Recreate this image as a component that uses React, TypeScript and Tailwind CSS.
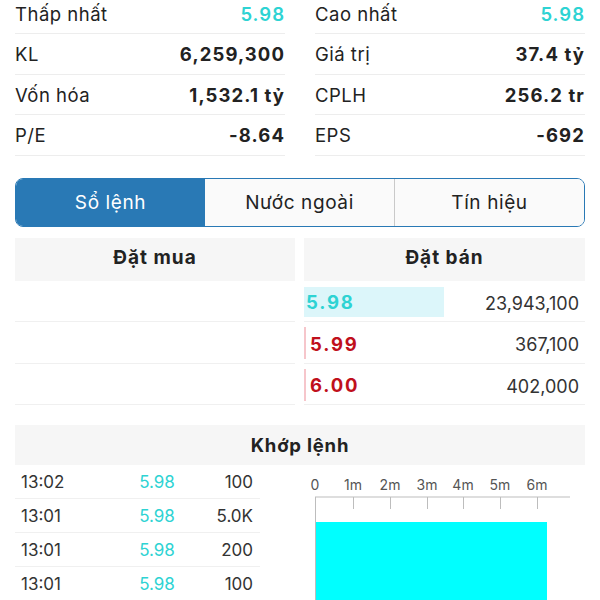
const stats: [string, string, string, string, boolean][] = [
  ["Thấp nhất", "5.98", "Cao nhất", "5.98", true],
  ["KL", "6,259,300", "Giá trị", "37.4 tỷ", false],
  ["Vốn hóa", "1,532.1 tỷ", "CPLH", "256.2 tr", false],
  ["P/E", "-8.64", "EPS", "-692", false],
];

const asks = [
  { price: "5.98", qty: "23,943,100", up: true },
  { price: "5.99", qty: "367,100", up: false },
  { price: "6.00", qty: "402,000", up: false },
];

const trades = [
  ["13:02", "5.98", "100"],
  ["13:01", "5.98", "5.0K"],
  ["13:01", "5.98", "200"],
  ["13:01", "5.98", "100"],
];

const ticks = [15, 53, 90, 127, 163, 200, 237];
const tickLabels = ["0", "1m", "2m", "3m", "4m", "5m", "6m"];

function StatCell({ label, value, cyan }: { label: string; value: string; cyan: boolean }) {
  return (
    <div className="flex h-[40.5px] items-center justify-between border-b border-[#ededed] pt-[3px]">
      <span className="text-[18.5px] tracking-[0.5px] text-[#222]">{label}</span>
      <span
        className={
          cyan
            ? "text-[18.5px] font-semibold tracking-[1px] text-[#2ed3d3]"
            : "text-[18.5px] font-bold tracking-[1.1px] text-[#222]"
        }
      >
        {value}
      </span>
    </div>
  );
}

export default function App() {
  return (
    <div className="h-[600px] w-[600px] overflow-hidden bg-white font-['Inter','Liberation_Sans',sans-serif] text-[#222]">
      <div className="-mt-[6.5px] grid grid-cols-2 gap-x-[30px] px-[15px]">
        {stats.map(([l1, v1, l2, v2, cyan]) => (
          <div key={l1} className="contents">
            <StatCell label={l1} value={v1} cyan={cyan} />
            <StatCell label={l2} value={v2} cyan={cyan} />
          </div>
        ))}
      </div>

      <div className="mx-[15px] mt-[22px] flex h-[49px] overflow-hidden rounded-[8px] border border-[#2979b5] text-[19px] tracking-[0.6px]">
        <div className="flex flex-1 items-center justify-center bg-[#2979b5] pt-[2px] text-white">Sổ lệnh</div>
        <div className="flex flex-1 items-center justify-center border-r border-[#c9c9c9] bg-[#fafafa] pt-[2px] text-[#222]">Nước ngoài</div>
        <div className="flex flex-1 items-center justify-center bg-[#fafafa] pt-[2px] text-[#222]">Tín hiệu</div>
      </div>

      <div className="mt-[11px] flex gap-[9px] px-[15px]">
        <div className="w-[280px]">
          <div className="flex h-[43px] items-center justify-center bg-[#f6f6f6] pb-[2px] text-[19px] font-bold tracking-[1px]">Đặt mua</div>
          {asks.map((a, i) => (
            <div key={i} className="h-[41.5px] border-b border-[#f0f0f0]" />
          ))}
        </div>
        <div className="flex-1">
          <div className="flex h-[43px] items-center justify-center bg-[#f6f6f6] pb-[2px] text-[19px] font-bold tracking-[1px]">Đặt bán</div>
          {asks.map((a) => (
            <div key={a.price} className="flex h-[41.5px] items-center justify-between border-b border-[#f0f0f0] pr-[6px] pt-[2px]">
              {a.up ? (
                <div className="flex h-[30px] w-[140px] items-center bg-[#dcf6fa] pl-[2px] pt-[3px] text-[18.5px] font-bold tracking-[1.8px] text-[#2ed3d3]">
                  {a.price}
                </div>
              ) : (
                <div className="flex h-[32px] w-[140px] items-center border-l-2 border-[#f6c6cb] pl-[4px] pt-[3px] text-[18.5px] font-bold tracking-[1.8px] text-[#c0101c]">
                  {a.price}
                </div>
              )}
              <span className="pt-[3px] text-[18px] text-[#333]">{a.qty}</span>
            </div>
          ))}
        </div>
      </div>

      <div className="mx-[15px] mt-[20px] flex h-[40px] items-center justify-center bg-[#f6f6f6] pt-[2px] text-[18.5px] font-bold tracking-[0.8px]">
        Khớp lệnh
      </div>

      <div className="flex">
        <div className="ml-[15px] w-[245px]">
          {trades.map(([t, p, v], i) => (
            <div key={i} className="grid h-[34px] grid-cols-[105px_70px_1fr] items-center border-b border-[#f0f0f0] pl-[6px] pr-[7px] pt-[2px] text-[17px]">
              <span className="text-[#333]">{t}</span>
              <span className="pr-[8px] text-center text-[#2ed3d3]">{p}</span>
              <span className="text-right text-[#333]">{v}</span>
            </div>
          ))}
        </div>
        <svg width="300" height="135" className="ml-[40px] block shrink-0" viewBox="0 0 300 135">
          {ticks.map((x, i) => (
            <text key={i} x={x} y={25} textAnchor="middle" fontSize="14" fill="#555" fontFamily="Inter, Liberation Sans, sans-serif">
              {tickLabels[i]}
            </text>
          ))}
          <line x1={15} y1={32} x2={270} y2={32} stroke="#bdbdbd" strokeWidth={1} />
          <line x1={15.5} y1={32} x2={15.5} y2={135} stroke="#bdbdbd" strokeWidth={1} />
          {ticks.slice(1).map((x) => (
            <line key={x} x1={x + 0.5} y1={32} x2={x + 0.5} y2={44} stroke="#bdbdbd" strokeWidth={1} />
          ))}
          <rect x={16} y={57} width={231} height={78} fill="#00ffff" />
        </svg>
      </div>
    </div>
  );
}
